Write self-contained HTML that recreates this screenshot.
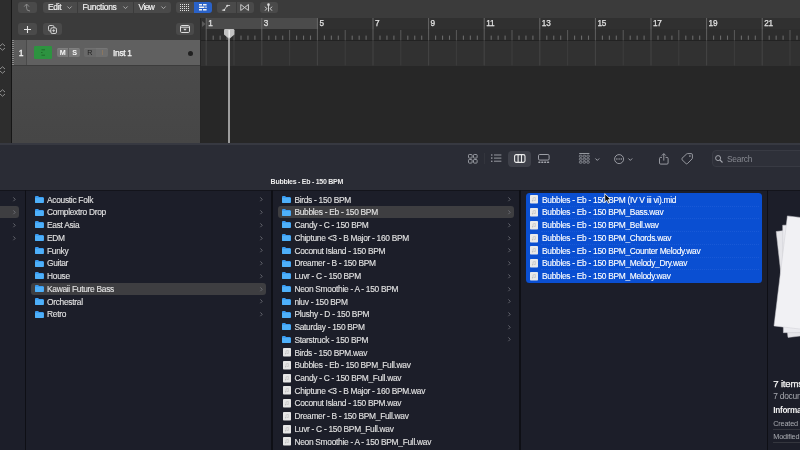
<!DOCTYPE html>
<html><head><meta charset="utf-8"><title>Logic + Finder</title>
<style>
*{margin:0;padding:0;box-sizing:border-box}
html,body{width:800px;height:450px;overflow:hidden;background:#1c1e29}
body{font-family:"Liberation Sans",sans-serif;position:relative;color:#e4e4e4}
.a{position:absolute}
svg{position:absolute;overflow:visible}
#logic{left:0;top:0;width:800px;height:142.5px;background:#272727}
#strip{left:0;top:0;width:11px;height:142.5px;background:#2d2d2d}
#stripline{left:11px;top:0;width:1px;height:142.5px;background:#161616}
#hdr{left:12px;top:0;width:188px;height:142.5px;background:linear-gradient(180deg,#3b3b3b 0,#3b3b3b 66px,#4a4a4a 66px,#464646 142px)}
#topbar{left:200px;top:0;width:600px;height:18px;background:#3b3b3b}
.btn{background:#4c4c4c;border-radius:3px;height:12px;top:1.5px}
.lt{font-size:8.4px;color:#f0f0f0;letter-spacing:-0.25px;line-height:12px;white-space:nowrap;top:1.4px;-webkit-text-stroke:0.2px #f0f0f0}
#trk{left:12px;top:40px;width:188px;height:25.4px;background:#606060}
#trknum{left:14px;top:40px;width:12px;height:25.4px;background:#5b5b5b}
#rul{left:200px;top:18px;width:600px;height:11px;background:#303030}
#cyc{left:206px;top:18px;width:112px;height:11px;background:#4b4b4b}
#tick{left:200px;top:29px;width:600px;height:11px;background:#2d2d2d}
#lane{left:200px;top:40px;width:600px;height:25.6px;background:#313131;border-top:1px solid #222}
#below{left:200px;top:66px;width:600px;height:76.5px;background:#272727}
.rn{font-size:8.2px;color:#e2e2e2;top:18.6px;line-height:10px;letter-spacing:-0.2px;-webkit-text-stroke:0.25px #e2e2e2}
#fsep{left:0;top:142.5px;width:800px;height:2.5px;background:#373941}
#ftb{left:0;top:144.5px;width:800px;height:45.5px;background:#2a2c35}
#cols{left:0;top:190px;width:800px;height:260px;background:#1c1e29}
.div{top:190px;width:1.3px;height:260px;background:#0e0f15}
.row{height:12px;line-height:12px;font-size:8.4px;letter-spacing:-0.29px;white-space:nowrap;color:#e2e2e2;-webkit-text-stroke:0.12px currentColor}
.sel{background:#3e3e41;border-radius:3px}
.doc{width:8px;height:9px;background:#e4e4e4;border-radius:1px}
</style></head><body><div id="root" class="a" style="left:0;top:0;width:800px;height:450px;will-change:transform;overflow:hidden">
<div id="logic" class="a"></div><div id="strip" class="a"></div><div id="stripline" class="a"></div><div id="hdr" class="a"></div><div id="topbar" class="a"></div><div id="rul" class="a"></div><div id="cyc" class="a"></div><div id="tick" class="a"></div><div id="lane" class="a"></div><div id="below" class="a"></div><div id="trk" class="a"></div><div id="trknum" class="a"></div>
<svg style="left:0;top:43px" width="6" height="8" viewBox="0 0 6 8"><path d="M0 3 L2.5 0.8 L5 3 M0 5 L2.5 7.2 L5 5" fill="none" stroke="#9a9a9a" stroke-width="0.9"/></svg><svg style="left:0;top:66px" width="6" height="8" viewBox="0 0 6 8"><path d="M0 3 L2.5 0.8 L5 3 M0 5 L2.5 7.2 L5 5" fill="none" stroke="#9a9a9a" stroke-width="0.9"/></svg><svg style="left:0;top:89px" width="6" height="8" viewBox="0 0 6 8"><path d="M0 3 L2.5 0.8 L5 3 M0 5 L2.5 7.2 L5 5" fill="none" stroke="#9a9a9a" stroke-width="0.9"/></svg><div class="a" style="left:18px;top:1.8px;width:19px;height:11.4px;background:#4a4a4a;border-radius:3px;"></div><svg style="left:23px;top:3px" width="9" height="9" viewBox="0 0 9 9"><path d="M1.2 3.6 L3.6 1 L6 3.6 M3.6 1 V5.2 Q3.6 8 7 8" fill="none" stroke="#8a8a8a" stroke-width="1"/></svg><div class="a" style="left:42.5px;top:1.8px;width:128px;height:11.4px;background:#4a4a4a;border-radius:3px;"></div><div class="a" style="left:76.5px;top:1.8px;width:1px;height:11.4px;background:#3b3b3b"></div><div class="a" style="left:132.5px;top:1.8px;width:1px;height:11.4px;background:#3b3b3b"></div><div class="a lt" style="left:48px">Edit</div><svg style="left:66.5px;top:6px" width="5" height="3.6" viewBox="0 0 5 3.6"><path d="M0.4 0.5 L2.5 2.6 L4.6 0.5" fill="none" stroke="#a8a8a8" stroke-width="1"/></svg><div class="a lt" style="left:82.5px">Functions</div><svg style="left:122.5px;top:6px" width="5" height="3.6" viewBox="0 0 5 3.6"><path d="M0.4 0.5 L2.5 2.6 L4.6 0.5" fill="none" stroke="#a8a8a8" stroke-width="1"/></svg><div class="a lt" style="left:138.5px;letter-spacing:-0.55px">View</div><svg style="left:161px;top:6px" width="5" height="3.6" viewBox="0 0 5 3.6"><path d="M0.4 0.5 L2.5 2.6 L4.6 0.5" fill="none" stroke="#a8a8a8" stroke-width="1"/></svg><div class="a" style="left:175.5px;top:1.8px;width:18.5px;height:11.4px;background:#4a4a4a;border-radius:3px;border-radius:3px 0 0 3px"></div><div class="a" style="left:194px;top:1.8px;width:18px;height:11.4px;background:#2a62c8;border-radius:3px;border-radius:0 3px 3px 0"></div><svg style="left:180px;top:4px" width="9" height="7" viewBox="0 0 9 7"><rect x="0" y="0" width="1" height="1" fill="#e0e0e0"/><rect x="2" y="0" width="1" height="1" fill="#e0e0e0"/><rect x="4" y="0" width="1" height="1" fill="#e0e0e0"/><rect x="6" y="0" width="1" height="1" fill="#e0e0e0"/><rect x="8" y="0" width="1" height="1" fill="#e0e0e0"/><rect x="0" y="2" width="1" height="1" fill="#e0e0e0"/><rect x="2" y="2" width="1" height="1" fill="#e0e0e0"/><rect x="4" y="2" width="1" height="1" fill="#e0e0e0"/><rect x="6" y="2" width="1" height="1" fill="#e0e0e0"/><rect x="8" y="2" width="1" height="1" fill="#e0e0e0"/><rect x="0" y="4" width="1" height="1" fill="#e0e0e0"/><rect x="2" y="4" width="1" height="1" fill="#e0e0e0"/><rect x="4" y="4" width="1" height="1" fill="#e0e0e0"/><rect x="6" y="4" width="1" height="1" fill="#e0e0e0"/><rect x="8" y="4" width="1" height="1" fill="#e0e0e0"/><rect x="0" y="6" width="1" height="1" fill="#e0e0e0"/><rect x="2" y="6" width="1" height="1" fill="#e0e0e0"/><rect x="4" y="6" width="1" height="1" fill="#e0e0e0"/><rect x="6" y="6" width="1" height="1" fill="#e0e0e0"/><rect x="8" y="6" width="1" height="1" fill="#e0e0e0"/></svg><svg style="left:199.3px;top:4.3px" width="7.6" height="6.6" viewBox="0 0 7.6 6.6"><path d="M0 0.8 H3 M4 0.8 H7.6 M0 3.3 H5.4 M6.4 3.3 H7.6 M0 5.8 H3 M4 5.8 H7.6" stroke="#f4f4f4" stroke-width="1.4" fill="none"/></svg><div class="a" style="left:217px;top:1.8px;width:37px;height:11.4px;background:#4a4a4a;border-radius:3px;"></div><div class="a" style="left:235.5px;top:1.8px;width:1px;height:11.4px;background:#3b3b3b"></div><svg style="left:221px;top:4px" width="10" height="7.4" viewBox="0 0 11 9"><path d="M0.5 7.5 H3.2 L7 1.8 H10.5" fill="none" stroke="#dcdcdc" stroke-width="1"/><circle cx="3.4" cy="7.3" r="1.2" fill="#dcdcdc"/><circle cx="7" cy="2" r="1.2" fill="#dcdcdc"/></svg><svg style="left:239.8px;top:4px" width="9.2" height="7" viewBox="0 0 10 8"><path d="M0.6 0.6 V7.4 L5 4 L9.4 7.4 V0.6 L5 4 Z" fill="none" stroke="#dcdcdc" stroke-width="1" stroke-linejoin="round"/></svg><div class="a" style="left:259.5px;top:1.8px;width:18.5px;height:11.4px;background:#4a4a4a;border-radius:3px;"></div><svg style="left:264.3px;top:3.2px" width="9" height="8.6" viewBox="0 0 10 10"><circle cx="5" cy="1.9" r="1.5" fill="#dcdcdc"/><path d="M5 2.5 V9.8 M1 4.3 L3 6.6 L1 8.9 M9 4.3 L7 6.6 L9 8.9" fill="none" stroke="#dcdcdc" stroke-width="1.1"/></svg><div class="a" style="left:18px;top:23px;width:19px;height:12px;background:#4a4a4a;border-radius:3px;"></div><svg style="left:24px;top:25.5px" width="7" height="7" viewBox="0 0 7 7"><path d="M3.5 0 V7 M0 3.5 H7" stroke="#e6e6e6" stroke-width="1.1"/></svg><div class="a" style="left:43px;top:23px;width:19px;height:12px;background:#4a4a4a;border-radius:3px;"></div><svg style="left:48px;top:24.5px" width="9" height="9" viewBox="0 0 9 9"><rect x="0.5" y="0.5" width="5.5" height="5.5" rx="1.4" fill="none" stroke="#e0e0e0" stroke-width="0.9"/><rect x="2.8" y="2.8" width="5.7" height="5.7" rx="1.4" fill="#4c4c4c" stroke="#e0e0e0" stroke-width="0.9"/><path d="M5.65 4.2 V7.1 M4.2 5.65 H7.1" stroke="#e0e0e0" stroke-width="0.8"/></svg><div class="a" style="left:175.5px;top:23px;width:18.5px;height:12px;background:#4a4a4a;border-radius:3px;"></div><svg style="left:180px;top:25px" width="10" height="8" viewBox="0 0 10 8"><rect x="0.5" y="0.5" width="9" height="7" rx="1.2" fill="none" stroke="#dedede" stroke-width="1"/><path d="M0.5 2.2 H9.5" stroke="#dedede" stroke-width="1"/><path d="M3.3 3.8 H6.7 L5 5.8 Z" fill="#dedede"/></svg><div class="a" style="left:12px;top:40px;width:2px;height:26px;background:repeating-linear-gradient(180deg,#8a8a8a 0 1px,#4a4a4a 1px 2px)"></div><div class="a" style="left:17.2px;top:47px;width:8px;font-size:8.5px;line-height:12px;color:#f4f4f4;text-align:center;-webkit-text-stroke:0.3px #f4f4f4">1</div><div class="a" style="left:26px;top:40px;width:1px;height:26px;background:#4a4a4a"></div><div class="a" style="left:34px;top:46px;width:18px;height:13px;background:#2d9340;border-radius:1.2px"></div><svg style="left:40px;top:49px" width="6" height="7" viewBox="0 0 6 7"><path d="M1.5 0.8 H5 M1 3.5 H2.5 M1.5 6.2 H5" stroke="#1f6a2b" stroke-width="1"/></svg><div class="a" style="left:57.2px;top:48px;width:11.2px;height:8.9px;background:#787878;border-radius:2px 0 0 2px;font-size:7.2px;line-height:9.1px;text-align:center;color:#f6f6f6;font-weight:bold;box-shadow:inset 0 0.6px 0 rgba(255,255,255,0.12)">M</div><div class="a" style="left:68.9px;top:48px;width:11.4px;height:8.9px;background:#787878;border-radius:0 2px 2px 0;font-size:7.2px;line-height:9.1px;text-align:center;color:#f6f6f6;font-weight:bold;box-shadow:inset 0 0.6px 0 rgba(255,255,255,0.12)">S</div><div class="a" style="left:84px;top:48px;width:11.6px;height:8.9px;background:#696969;border-radius:2px 0 0 2px;font-size:7.2px;line-height:9.1px;text-align:center;color:#1e1e1e;font-weight:normal;box-shadow:inset 0 0.6px 0 rgba(255,255,255,0.12)">R</div><div class="a" style="left:96px;top:48px;width:12px;height:8.9px;background:#6e6e6e;border-radius:0 2px 2px 0;font-size:7.2px;line-height:9.1px;text-align:center;color:#f6f6f6;font-weight:bold;box-shadow:inset 0 0.6px 0 rgba(255,255,255,0.12)"></div><div class="a" style="left:101.6px;top:50.4px;width:1px;height:4.5px;background:#8a7660"></div><div class="a" style="left:113px;top:47px;font-size:8.4px;line-height:12px;letter-spacing:-0.3px;color:#f6f6f6;white-space:nowrap;-webkit-text-stroke:0.25px #f6f6f6">Inst 1</div><div class="a" style="left:188.2px;top:50.6px;width:5px;height:5px;border-radius:50%;background:#202020"></div><div class="a" style="left:200px;top:18px;width:1px;height:124.5px;background:#262626"></div><div class="a" style="left:12px;top:65.2px;width:188px;height:1px;background:#3c3c3c"></div><svg style="left:201.5px;top:20.5px" width="4" height="6" viewBox="0 0 4 6"><path d="M0 0 L3.6 3 L0 6 Z" fill="#5a5a5a"/></svg><svg style="left:0;top:0" width="800" height="143" viewBox="0 0 800 143"><rect x="205.70" y="18" width="1" height="11" fill="#686868"/><rect x="205.70" y="29" width="1" height="11" fill="#606060"/><rect x="205.70" y="40" width="1" height="25.5" fill="#454545"/><rect x="212.65" y="35.6" width="1.1" height="4.2" fill="#6a6a6a"/><rect x="219.60" y="35.6" width="1.1" height="4.2" fill="#6a6a6a"/><rect x="226.55" y="35.6" width="1.1" height="4.2" fill="#6a6a6a"/><rect x="233.50" y="30" width="1" height="10" fill="#5a5a5a"/><rect x="233.50" y="40" width="1" height="25.5" fill="#3e3e3e"/><rect x="240.45" y="35.6" width="1.1" height="4.2" fill="#6a6a6a"/><rect x="247.40" y="35.6" width="1.1" height="4.2" fill="#6a6a6a"/><rect x="254.35" y="35.6" width="1.1" height="4.2" fill="#6a6a6a"/><rect x="261.30" y="18" width="1" height="11" fill="#686868"/><rect x="261.30" y="29" width="1" height="11" fill="#606060"/><rect x="261.30" y="40" width="1" height="25.5" fill="#454545"/><rect x="268.25" y="35.6" width="1.1" height="4.2" fill="#6a6a6a"/><rect x="275.20" y="35.6" width="1.1" height="4.2" fill="#6a6a6a"/><rect x="282.15" y="35.6" width="1.1" height="4.2" fill="#6a6a6a"/><rect x="289.10" y="30" width="1" height="10" fill="#5a5a5a"/><rect x="289.10" y="40" width="1" height="25.5" fill="#3e3e3e"/><rect x="296.05" y="35.6" width="1.1" height="4.2" fill="#6a6a6a"/><rect x="303.00" y="35.6" width="1.1" height="4.2" fill="#6a6a6a"/><rect x="309.95" y="35.6" width="1.1" height="4.2" fill="#6a6a6a"/><rect x="316.90" y="18" width="1" height="11" fill="#686868"/><rect x="316.90" y="29" width="1" height="11" fill="#606060"/><rect x="316.90" y="40" width="1" height="25.5" fill="#454545"/><rect x="323.85" y="35.6" width="1.1" height="4.2" fill="#6a6a6a"/><rect x="330.80" y="35.6" width="1.1" height="4.2" fill="#6a6a6a"/><rect x="337.75" y="35.6" width="1.1" height="4.2" fill="#6a6a6a"/><rect x="344.70" y="30" width="1" height="10" fill="#5a5a5a"/><rect x="344.70" y="40" width="1" height="25.5" fill="#3e3e3e"/><rect x="351.65" y="35.6" width="1.1" height="4.2" fill="#6a6a6a"/><rect x="358.60" y="35.6" width="1.1" height="4.2" fill="#6a6a6a"/><rect x="365.55" y="35.6" width="1.1" height="4.2" fill="#6a6a6a"/><rect x="372.50" y="18" width="1" height="11" fill="#686868"/><rect x="372.50" y="29" width="1" height="11" fill="#606060"/><rect x="372.50" y="40" width="1" height="25.5" fill="#454545"/><rect x="379.45" y="35.6" width="1.1" height="4.2" fill="#6a6a6a"/><rect x="386.40" y="35.6" width="1.1" height="4.2" fill="#6a6a6a"/><rect x="393.35" y="35.6" width="1.1" height="4.2" fill="#6a6a6a"/><rect x="400.30" y="30" width="1" height="10" fill="#5a5a5a"/><rect x="400.30" y="40" width="1" height="25.5" fill="#3e3e3e"/><rect x="407.25" y="35.6" width="1.1" height="4.2" fill="#6a6a6a"/><rect x="414.20" y="35.6" width="1.1" height="4.2" fill="#6a6a6a"/><rect x="421.15" y="35.6" width="1.1" height="4.2" fill="#6a6a6a"/><rect x="428.10" y="18" width="1" height="11" fill="#686868"/><rect x="428.10" y="29" width="1" height="11" fill="#606060"/><rect x="428.10" y="40" width="1" height="25.5" fill="#454545"/><rect x="435.05" y="35.6" width="1.1" height="4.2" fill="#6a6a6a"/><rect x="442.00" y="35.6" width="1.1" height="4.2" fill="#6a6a6a"/><rect x="448.95" y="35.6" width="1.1" height="4.2" fill="#6a6a6a"/><rect x="455.90" y="30" width="1" height="10" fill="#5a5a5a"/><rect x="455.90" y="40" width="1" height="25.5" fill="#3e3e3e"/><rect x="462.85" y="35.6" width="1.1" height="4.2" fill="#6a6a6a"/><rect x="469.80" y="35.6" width="1.1" height="4.2" fill="#6a6a6a"/><rect x="476.75" y="35.6" width="1.1" height="4.2" fill="#6a6a6a"/><rect x="483.70" y="18" width="1" height="11" fill="#686868"/><rect x="483.70" y="29" width="1" height="11" fill="#606060"/><rect x="483.70" y="40" width="1" height="25.5" fill="#454545"/><rect x="490.65" y="35.6" width="1.1" height="4.2" fill="#6a6a6a"/><rect x="497.60" y="35.6" width="1.1" height="4.2" fill="#6a6a6a"/><rect x="504.55" y="35.6" width="1.1" height="4.2" fill="#6a6a6a"/><rect x="511.50" y="30" width="1" height="10" fill="#5a5a5a"/><rect x="511.50" y="40" width="1" height="25.5" fill="#3e3e3e"/><rect x="518.45" y="35.6" width="1.1" height="4.2" fill="#6a6a6a"/><rect x="525.40" y="35.6" width="1.1" height="4.2" fill="#6a6a6a"/><rect x="532.35" y="35.6" width="1.1" height="4.2" fill="#6a6a6a"/><rect x="539.30" y="18" width="1" height="11" fill="#686868"/><rect x="539.30" y="29" width="1" height="11" fill="#606060"/><rect x="539.30" y="40" width="1" height="25.5" fill="#454545"/><rect x="546.25" y="35.6" width="1.1" height="4.2" fill="#6a6a6a"/><rect x="553.20" y="35.6" width="1.1" height="4.2" fill="#6a6a6a"/><rect x="560.15" y="35.6" width="1.1" height="4.2" fill="#6a6a6a"/><rect x="567.10" y="30" width="1" height="10" fill="#5a5a5a"/><rect x="567.10" y="40" width="1" height="25.5" fill="#3e3e3e"/><rect x="574.05" y="35.6" width="1.1" height="4.2" fill="#6a6a6a"/><rect x="581.00" y="35.6" width="1.1" height="4.2" fill="#6a6a6a"/><rect x="587.95" y="35.6" width="1.1" height="4.2" fill="#6a6a6a"/><rect x="594.90" y="18" width="1" height="11" fill="#686868"/><rect x="594.90" y="29" width="1" height="11" fill="#606060"/><rect x="594.90" y="40" width="1" height="25.5" fill="#454545"/><rect x="601.85" y="35.6" width="1.1" height="4.2" fill="#6a6a6a"/><rect x="608.80" y="35.6" width="1.1" height="4.2" fill="#6a6a6a"/><rect x="615.75" y="35.6" width="1.1" height="4.2" fill="#6a6a6a"/><rect x="622.70" y="30" width="1" height="10" fill="#5a5a5a"/><rect x="622.70" y="40" width="1" height="25.5" fill="#3e3e3e"/><rect x="629.65" y="35.6" width="1.1" height="4.2" fill="#6a6a6a"/><rect x="636.60" y="35.6" width="1.1" height="4.2" fill="#6a6a6a"/><rect x="643.55" y="35.6" width="1.1" height="4.2" fill="#6a6a6a"/><rect x="650.50" y="18" width="1" height="11" fill="#686868"/><rect x="650.50" y="29" width="1" height="11" fill="#606060"/><rect x="650.50" y="40" width="1" height="25.5" fill="#454545"/><rect x="657.45" y="35.6" width="1.1" height="4.2" fill="#6a6a6a"/><rect x="664.40" y="35.6" width="1.1" height="4.2" fill="#6a6a6a"/><rect x="671.35" y="35.6" width="1.1" height="4.2" fill="#6a6a6a"/><rect x="678.30" y="30" width="1" height="10" fill="#5a5a5a"/><rect x="678.30" y="40" width="1" height="25.5" fill="#3e3e3e"/><rect x="685.25" y="35.6" width="1.1" height="4.2" fill="#6a6a6a"/><rect x="692.20" y="35.6" width="1.1" height="4.2" fill="#6a6a6a"/><rect x="699.15" y="35.6" width="1.1" height="4.2" fill="#6a6a6a"/><rect x="706.10" y="18" width="1" height="11" fill="#686868"/><rect x="706.10" y="29" width="1" height="11" fill="#606060"/><rect x="706.10" y="40" width="1" height="25.5" fill="#454545"/><rect x="713.05" y="35.6" width="1.1" height="4.2" fill="#6a6a6a"/><rect x="720.00" y="35.6" width="1.1" height="4.2" fill="#6a6a6a"/><rect x="726.95" y="35.6" width="1.1" height="4.2" fill="#6a6a6a"/><rect x="733.90" y="30" width="1" height="10" fill="#5a5a5a"/><rect x="733.90" y="40" width="1" height="25.5" fill="#3e3e3e"/><rect x="740.85" y="35.6" width="1.1" height="4.2" fill="#6a6a6a"/><rect x="747.80" y="35.6" width="1.1" height="4.2" fill="#6a6a6a"/><rect x="754.75" y="35.6" width="1.1" height="4.2" fill="#6a6a6a"/><rect x="761.70" y="18" width="1" height="11" fill="#686868"/><rect x="761.70" y="29" width="1" height="11" fill="#606060"/><rect x="761.70" y="40" width="1" height="25.5" fill="#454545"/><rect x="768.65" y="35.6" width="1.1" height="4.2" fill="#6a6a6a"/><rect x="775.60" y="35.6" width="1.1" height="4.2" fill="#6a6a6a"/><rect x="782.55" y="35.6" width="1.1" height="4.2" fill="#6a6a6a"/><rect x="789.50" y="30" width="1" height="10" fill="#5a5a5a"/><rect x="789.50" y="40" width="1" height="25.5" fill="#3e3e3e"/><rect x="796.45" y="35.6" width="1.1" height="4.2" fill="#6a6a6a"/><rect x="803.40" y="35.6" width="1.1" height="4.2" fill="#6a6a6a"/><rect x="810.35" y="35.6" width="1.1" height="4.2" fill="#6a6a6a"/></svg><div class="a rn" style="left:208.2px">1</div><div class="a rn" style="left:263.8px">3</div><div class="a rn" style="left:319.4px">5</div><div class="a rn" style="left:375.0px">7</div><div class="a rn" style="left:430.6px">9</div><div class="a rn" style="left:486.2px">11</div><div class="a rn" style="left:541.8px">13</div><div class="a rn" style="left:597.4px">15</div><div class="a rn" style="left:653.0px">17</div><div class="a rn" style="left:708.6px">19</div><div class="a rn" style="left:764.2px">21</div><div class="a" style="left:228.3px;top:35px;width:1.8px;height:107.5px;background:#9c9c9c"></div><svg style="left:224px;top:29.3px" width="10.4" height="10" viewBox="0 0 10.4 10"><path d="M1.2 0 H9.2 Q10.4 0 10.4 1.2 V5.5 L5.2 10 L0 5.5 V1.2 Q0 0 1.2 0 Z" fill="#c2c2c2"/><path d="M5.2 1 V8.5" stroke="#ededed" stroke-width="1.4"/></svg>
<div id="fsep" class="a"></div><div id="ftb" class="a"></div><div id="cols" class="a"></div>
<svg style="left:467.5px;top:153.8px" width="9.6" height="9.6" viewBox="0 0 9.6 9.6"><rect x="0.5" y="0.5" width="3.6" height="3.6" rx="0.8" fill="none" stroke="#a4a6ad" stroke-width="0.9"/><rect x="5.5" y="0.5" width="3.6" height="3.6" rx="0.8" fill="none" stroke="#a4a6ad" stroke-width="0.9"/><rect x="0.5" y="5.5" width="3.6" height="3.6" rx="0.8" fill="none" stroke="#a4a6ad" stroke-width="0.9"/><rect x="5.5" y="5.5" width="3.6" height="3.6" rx="0.8" fill="none" stroke="#a4a6ad" stroke-width="0.9"/></svg><div class="a" style="left:483.5px;top:153px;width:1px;height:11px;background:#33353d"></div><svg style="left:490.7px;top:154.4px" width="10.4" height="8.2" viewBox="0 0 10.4 8.2"><circle cx="0.8" cy="1" r="0.8" fill="#a4a6ad"/><path d="M3 1 H10.4" stroke="#a4a6ad" stroke-width="0.9"/><circle cx="0.8" cy="4.1" r="0.8" fill="#a4a6ad"/><path d="M3 4.1 H10.4" stroke="#a4a6ad" stroke-width="0.9"/><circle cx="0.8" cy="7.2" r="0.8" fill="#a4a6ad"/><path d="M3 7.2 H10.4" stroke="#a4a6ad" stroke-width="0.9"/></svg><div class="a" style="left:508.2px;top:150.5px;width:23px;height:16.3px;border-radius:4px;background:#3e4049"></div><svg style="left:514px;top:154px" width="11.6" height="9" viewBox="0 0 11.6 9"><rect x="0.6" y="0.6" width="10.4" height="7.8" rx="1.6" fill="none" stroke="#ececec" stroke-width="1.1"/><path d="M4.1 0.6 V8.4 M7.5 0.6 V8.4" stroke="#ececec" stroke-width="1.1"/></svg><svg style="left:537.6px;top:154px" width="11.6" height="9.2" viewBox="0 0 11.6 9.2"><rect x="0.5" y="0.5" width="10.6" height="5.6" rx="1.2" fill="none" stroke="#a4a6ad" stroke-width="0.95"/><rect x="0.3" y="7.5" width="2.2" height="1.5" rx="0.4" fill="#a4a6ad"/><rect x="3.1999999999999997" y="7.5" width="2.2" height="1.5" rx="0.4" fill="#a4a6ad"/><rect x="6.1" y="7.5" width="2.2" height="1.5" rx="0.4" fill="#a4a6ad"/><rect x="9.0" y="7.5" width="2.2" height="1.5" rx="0.4" fill="#a4a6ad"/></svg><svg style="left:579.3px;top:152.6px" width="10.6" height="11.4" viewBox="0 0 10.6 11.4"><path d="M0.2 0.5 H10.4" stroke="#a4a6ad" stroke-width="0.9"/><rect x="0.4" y="2.2" width="2.5" height="2" rx="0.6" fill="none" stroke="#a4a6ad" stroke-width="0.7"/><rect x="4.1000000000000005" y="2.2" width="2.5" height="2" rx="0.6" fill="none" stroke="#a4a6ad" stroke-width="0.7"/><rect x="7.800000000000001" y="2.2" width="2.5" height="2" rx="0.6" fill="none" stroke="#a4a6ad" stroke-width="0.7"/><rect x="0.4" y="5.2" width="2.5" height="2" rx="0.6" fill="none" stroke="#a4a6ad" stroke-width="0.7"/><rect x="4.1000000000000005" y="5.2" width="2.5" height="2" rx="0.6" fill="none" stroke="#a4a6ad" stroke-width="0.7"/><rect x="7.800000000000001" y="5.2" width="2.5" height="2" rx="0.6" fill="none" stroke="#a4a6ad" stroke-width="0.7"/><rect x="0.4" y="8.2" width="2.5" height="2" rx="0.6" fill="none" stroke="#a4a6ad" stroke-width="0.7"/><rect x="4.1000000000000005" y="8.2" width="2.5" height="2" rx="0.6" fill="none" stroke="#a4a6ad" stroke-width="0.7"/><rect x="7.800000000000001" y="8.2" width="2.5" height="2" rx="0.6" fill="none" stroke="#a4a6ad" stroke-width="0.7"/></svg><svg style="left:594.6px;top:157.6px" width="4.6" height="3.4" viewBox="0 0 4.6 3.4"><path d="M0.4 0.5 L2.3 2.4 L4.199999999999999 0.5" fill="none" stroke="#a4a6ad" stroke-width="0.95"/></svg><svg style="left:613.7px;top:153.5px" width="10.2" height="10.2" viewBox="0 0 10.2 10.2"><circle cx="5.1" cy="5.1" r="4.5" fill="none" stroke="#a4a6ad" stroke-width="0.9"/><circle cx="2.9" cy="5.1" r="0.75" fill="#a4a6ad"/><circle cx="5.1" cy="5.1" r="0.75" fill="#a4a6ad"/><circle cx="7.3" cy="5.1" r="0.75" fill="#a4a6ad"/></svg><svg style="left:628px;top:157.6px" width="4.6" height="3.4" viewBox="0 0 4.6 3.4"><path d="M0.4 0.5 L2.3 2.4 L4.199999999999999 0.5" fill="none" stroke="#a4a6ad" stroke-width="0.95"/></svg><svg style="left:659.3px;top:152.8px" width="9.6" height="11.6" viewBox="0 0 9.6 11.6"><path d="M3 4.4 H1.6 Q0.5 4.4 0.5 5.5 V10 Q0.5 11.1 1.6 11.1 H8 Q9.1 11.1 9.1 10 V5.5 Q9.1 4.4 8 4.4 H6.6" fill="none" stroke="#a4a6ad" stroke-width="0.9"/><path d="M4.8 7.6 V0.8 M2.8 2.6 L4.8 0.6 L6.8 2.6" fill="none" stroke="#a4a6ad" stroke-width="0.9"/></svg><svg style="left:681px;top:153px" width="12" height="11.4" viewBox="0 0 12 11.4"><path d="M6.6 0.6 H10.2 Q11.4 0.6 11.4 1.8 V5 Q11.4 5.6 11 6 L6.4 10.6 Q5.7 11.2 5 10.6 L1 6.7 Q0.4 6 1 5.3 L5.6 1 Q6 0.6 6.6 0.6 Z" fill="none" stroke="#a4a6ad" stroke-width="0.9" stroke-linejoin="round"/><circle cx="8.9" cy="3.1" r="0.8" fill="#a4a6ad"/></svg><div class="a" style="left:711.6px;top:150px;width:100px;height:16.6px;border-radius:4px;background:#2e3039;border:1px solid #383a43"></div><svg style="left:715.4px;top:154.6px" width="8" height="8" viewBox="0 0 8 8"><circle cx="3.1" cy="3.1" r="2.5" fill="none" stroke="#a4a6ad" stroke-width="1"/><path d="M5 5 L7.5 7.5" stroke="#a4a6ad" stroke-width="1.1"/></svg><div class="a" style="left:727px;top:153.4px;font-size:8.4px;line-height:12px;letter-spacing:-0.25px;color:#868890">Search</div><div class="a" style="left:270.6px;top:176.3px;font-size:7px;line-height:11px;font-weight:bold;letter-spacing:-0.26px;color:#ececec;white-space:nowrap">Bubbles - Eb - 150 BPM</div><div class="a" style="left:0;top:189.6px;width:800px;height:1px;background:#13141b"></div><div class="a div" style="left:24.8px"></div><div class="a div" style="left:271.4px"></div><div class="a div" style="left:519.4px"></div><div class="a div" style="left:766.8px"></div><div class="a" style="left:-4px;top:206.23px;width:23px;height:12px;border-radius:3px;background:#3e3e41"></div><svg style="left:12.8px;top:197.40px" width="2.6" height="4.6" viewBox="0 0 3 5.2"><path d="M0.4 0.4 L2.6 2.6 L0.4 4.8" fill="none" stroke="#75777e" stroke-width="0.9"/></svg><svg style="left:12.8px;top:210.13px" width="2.6" height="4.6" viewBox="0 0 3 5.2"><path d="M0.4 0.4 L2.6 2.6 L0.4 4.8" fill="none" stroke="#75777e" stroke-width="0.9"/></svg><svg style="left:12.8px;top:222.87px" width="2.6" height="4.6" viewBox="0 0 3 5.2"><path d="M0.4 0.4 L2.6 2.6 L0.4 4.8" fill="none" stroke="#75777e" stroke-width="0.9"/></svg><svg style="left:12.8px;top:235.61px" width="2.6" height="4.6" viewBox="0 0 3 5.2"><path d="M0.4 0.4 L2.6 2.6 L0.4 4.8" fill="none" stroke="#75777e" stroke-width="0.9"/></svg><svg style="left:35px;top:196.00px" width="8.8" height="7" viewBox="0 0 9.2 7.4" preserveAspectRatio="none"><path d="M0 1 Q0 0 1 0 H3.2 L4.3 1 H8.2 Q9.2 1 9.2 2 V6.4 Q9.2 7.4 8.2 7.4 H1 Q0 7.4 0 6.4 Z" fill="#3a9cf2"/><path d="M0 2.2 H9.2 V6.4 Q9.2 7.4 8.2 7.4 H1 Q0 7.4 0 6.4 Z" fill="#4eb0fa"/></svg><div class="a row" style="left:47px;top:193.70px;color:#e2e2e2;">Acoustic Folk</div><svg style="left:260.3px;top:197.40px" width="2.6" height="4.6" viewBox="0 0 3 5.2"><path d="M0.4 0.4 L2.6 2.6 L0.4 4.8" fill="none" stroke="#75777e" stroke-width="0.9"/></svg><svg style="left:35px;top:208.73px" width="8.8" height="7" viewBox="0 0 9.2 7.4" preserveAspectRatio="none"><path d="M0 1 Q0 0 1 0 H3.2 L4.3 1 H8.2 Q9.2 1 9.2 2 V6.4 Q9.2 7.4 8.2 7.4 H1 Q0 7.4 0 6.4 Z" fill="#3a9cf2"/><path d="M0 2.2 H9.2 V6.4 Q9.2 7.4 8.2 7.4 H1 Q0 7.4 0 6.4 Z" fill="#4eb0fa"/></svg><div class="a row" style="left:47px;top:206.43px;color:#e2e2e2;">Complextro Drop</div><svg style="left:260.3px;top:210.13px" width="2.6" height="4.6" viewBox="0 0 3 5.2"><path d="M0.4 0.4 L2.6 2.6 L0.4 4.8" fill="none" stroke="#75777e" stroke-width="0.9"/></svg><svg style="left:35px;top:221.47px" width="8.8" height="7" viewBox="0 0 9.2 7.4" preserveAspectRatio="none"><path d="M0 1 Q0 0 1 0 H3.2 L4.3 1 H8.2 Q9.2 1 9.2 2 V6.4 Q9.2 7.4 8.2 7.4 H1 Q0 7.4 0 6.4 Z" fill="#3a9cf2"/><path d="M0 2.2 H9.2 V6.4 Q9.2 7.4 8.2 7.4 H1 Q0 7.4 0 6.4 Z" fill="#4eb0fa"/></svg><div class="a row" style="left:47px;top:219.17px;color:#e2e2e2;">East Asia</div><svg style="left:260.3px;top:222.87px" width="2.6" height="4.6" viewBox="0 0 3 5.2"><path d="M0.4 0.4 L2.6 2.6 L0.4 4.8" fill="none" stroke="#75777e" stroke-width="0.9"/></svg><svg style="left:35px;top:234.21px" width="8.8" height="7" viewBox="0 0 9.2 7.4" preserveAspectRatio="none"><path d="M0 1 Q0 0 1 0 H3.2 L4.3 1 H8.2 Q9.2 1 9.2 2 V6.4 Q9.2 7.4 8.2 7.4 H1 Q0 7.4 0 6.4 Z" fill="#3a9cf2"/><path d="M0 2.2 H9.2 V6.4 Q9.2 7.4 8.2 7.4 H1 Q0 7.4 0 6.4 Z" fill="#4eb0fa"/></svg><div class="a row" style="left:47px;top:231.91px;color:#e2e2e2;">EDM</div><svg style="left:260.3px;top:235.61px" width="2.6" height="4.6" viewBox="0 0 3 5.2"><path d="M0.4 0.4 L2.6 2.6 L0.4 4.8" fill="none" stroke="#75777e" stroke-width="0.9"/></svg><svg style="left:35px;top:246.94px" width="8.8" height="7" viewBox="0 0 9.2 7.4" preserveAspectRatio="none"><path d="M0 1 Q0 0 1 0 H3.2 L4.3 1 H8.2 Q9.2 1 9.2 2 V6.4 Q9.2 7.4 8.2 7.4 H1 Q0 7.4 0 6.4 Z" fill="#3a9cf2"/><path d="M0 2.2 H9.2 V6.4 Q9.2 7.4 8.2 7.4 H1 Q0 7.4 0 6.4 Z" fill="#4eb0fa"/></svg><div class="a row" style="left:47px;top:244.64px;color:#e2e2e2;">Funky</div><svg style="left:260.3px;top:248.34px" width="2.6" height="4.6" viewBox="0 0 3 5.2"><path d="M0.4 0.4 L2.6 2.6 L0.4 4.8" fill="none" stroke="#75777e" stroke-width="0.9"/></svg><svg style="left:35px;top:259.67px" width="8.8" height="7" viewBox="0 0 9.2 7.4" preserveAspectRatio="none"><path d="M0 1 Q0 0 1 0 H3.2 L4.3 1 H8.2 Q9.2 1 9.2 2 V6.4 Q9.2 7.4 8.2 7.4 H1 Q0 7.4 0 6.4 Z" fill="#3a9cf2"/><path d="M0 2.2 H9.2 V6.4 Q9.2 7.4 8.2 7.4 H1 Q0 7.4 0 6.4 Z" fill="#4eb0fa"/></svg><div class="a row" style="left:47px;top:257.38px;color:#e2e2e2;">Guitar</div><svg style="left:260.3px;top:261.07px" width="2.6" height="4.6" viewBox="0 0 3 5.2"><path d="M0.4 0.4 L2.6 2.6 L0.4 4.8" fill="none" stroke="#75777e" stroke-width="0.9"/></svg><svg style="left:35px;top:272.41px" width="8.8" height="7" viewBox="0 0 9.2 7.4" preserveAspectRatio="none"><path d="M0 1 Q0 0 1 0 H3.2 L4.3 1 H8.2 Q9.2 1 9.2 2 V6.4 Q9.2 7.4 8.2 7.4 H1 Q0 7.4 0 6.4 Z" fill="#3a9cf2"/><path d="M0 2.2 H9.2 V6.4 Q9.2 7.4 8.2 7.4 H1 Q0 7.4 0 6.4 Z" fill="#4eb0fa"/></svg><div class="a row" style="left:47px;top:270.11px;color:#e2e2e2;">House</div><svg style="left:260.3px;top:273.81px" width="2.6" height="4.6" viewBox="0 0 3 5.2"><path d="M0.4 0.4 L2.6 2.6 L0.4 4.8" fill="none" stroke="#75777e" stroke-width="0.9"/></svg><div class="a sel" style="left:31.4px;top:282.64px;width:235px;height:12px"></div><svg style="left:35px;top:285.14px" width="8.8" height="7" viewBox="0 0 9.2 7.4" preserveAspectRatio="none"><path d="M0 1 Q0 0 1 0 H3.2 L4.3 1 H8.2 Q9.2 1 9.2 2 V6.4 Q9.2 7.4 8.2 7.4 H1 Q0 7.4 0 6.4 Z" fill="#3a9cf2"/><path d="M0 2.2 H9.2 V6.4 Q9.2 7.4 8.2 7.4 H1 Q0 7.4 0 6.4 Z" fill="#4eb0fa"/></svg><div class="a row" style="left:47px;top:282.85px;color:#e2e2e2;">Kawaii Future Bass</div><svg style="left:260.3px;top:286.55px" width="2.6" height="4.6" viewBox="0 0 3 5.2"><path d="M0.4 0.4 L2.6 2.6 L0.4 4.8" fill="none" stroke="#75777e" stroke-width="0.9"/></svg><svg style="left:35px;top:297.88px" width="8.8" height="7" viewBox="0 0 9.2 7.4" preserveAspectRatio="none"><path d="M0 1 Q0 0 1 0 H3.2 L4.3 1 H8.2 Q9.2 1 9.2 2 V6.4 Q9.2 7.4 8.2 7.4 H1 Q0 7.4 0 6.4 Z" fill="#3a9cf2"/><path d="M0 2.2 H9.2 V6.4 Q9.2 7.4 8.2 7.4 H1 Q0 7.4 0 6.4 Z" fill="#4eb0fa"/></svg><div class="a row" style="left:47px;top:295.58px;color:#e2e2e2;">Orchestral</div><svg style="left:260.3px;top:299.28px" width="2.6" height="4.6" viewBox="0 0 3 5.2"><path d="M0.4 0.4 L2.6 2.6 L0.4 4.8" fill="none" stroke="#75777e" stroke-width="0.9"/></svg><svg style="left:35px;top:310.61px" width="8.8" height="7" viewBox="0 0 9.2 7.4" preserveAspectRatio="none"><path d="M0 1 Q0 0 1 0 H3.2 L4.3 1 H8.2 Q9.2 1 9.2 2 V6.4 Q9.2 7.4 8.2 7.4 H1 Q0 7.4 0 6.4 Z" fill="#3a9cf2"/><path d="M0 2.2 H9.2 V6.4 Q9.2 7.4 8.2 7.4 H1 Q0 7.4 0 6.4 Z" fill="#4eb0fa"/></svg><div class="a row" style="left:47px;top:308.31px;color:#e2e2e2;">Retro</div><svg style="left:260.3px;top:312.01px" width="2.6" height="4.6" viewBox="0 0 3 5.2"><path d="M0.4 0.4 L2.6 2.6 L0.4 4.8" fill="none" stroke="#75777e" stroke-width="0.9"/></svg><svg style="left:282.3px;top:196.00px" width="8.8" height="7" viewBox="0 0 9.2 7.4" preserveAspectRatio="none"><path d="M0 1 Q0 0 1 0 H3.2 L4.3 1 H8.2 Q9.2 1 9.2 2 V6.4 Q9.2 7.4 8.2 7.4 H1 Q0 7.4 0 6.4 Z" fill="#3a9cf2"/><path d="M0 2.2 H9.2 V6.4 Q9.2 7.4 8.2 7.4 H1 Q0 7.4 0 6.4 Z" fill="#4eb0fa"/></svg><div class="a row" style="left:294.4px;top:193.70px;color:#e2e2e2;">Birds - 150 BPM</div><svg style="left:507.5px;top:197.40px" width="2.6" height="4.6" viewBox="0 0 3 5.2"><path d="M0.4 0.4 L2.6 2.6 L0.4 4.8" fill="none" stroke="#75777e" stroke-width="0.9"/></svg><div class="a sel" style="left:278.4px;top:206.23px;width:236px;height:12px"></div><svg style="left:282.3px;top:208.73px" width="8.8" height="7" viewBox="0 0 9.2 7.4" preserveAspectRatio="none"><path d="M0 1 Q0 0 1 0 H3.2 L4.3 1 H8.2 Q9.2 1 9.2 2 V6.4 Q9.2 7.4 8.2 7.4 H1 Q0 7.4 0 6.4 Z" fill="#3a9cf2"/><path d="M0 2.2 H9.2 V6.4 Q9.2 7.4 8.2 7.4 H1 Q0 7.4 0 6.4 Z" fill="#4eb0fa"/></svg><div class="a row" style="left:294.4px;top:206.43px;color:#e2e2e2;">Bubbles - Eb - 150 BPM</div><svg style="left:507.5px;top:210.13px" width="2.6" height="4.6" viewBox="0 0 3 5.2"><path d="M0.4 0.4 L2.6 2.6 L0.4 4.8" fill="none" stroke="#75777e" stroke-width="0.9"/></svg><svg style="left:282.3px;top:221.47px" width="8.8" height="7" viewBox="0 0 9.2 7.4" preserveAspectRatio="none"><path d="M0 1 Q0 0 1 0 H3.2 L4.3 1 H8.2 Q9.2 1 9.2 2 V6.4 Q9.2 7.4 8.2 7.4 H1 Q0 7.4 0 6.4 Z" fill="#3a9cf2"/><path d="M0 2.2 H9.2 V6.4 Q9.2 7.4 8.2 7.4 H1 Q0 7.4 0 6.4 Z" fill="#4eb0fa"/></svg><div class="a row" style="left:294.4px;top:219.17px;color:#e2e2e2;">Candy - C - 150 BPM</div><svg style="left:507.5px;top:222.87px" width="2.6" height="4.6" viewBox="0 0 3 5.2"><path d="M0.4 0.4 L2.6 2.6 L0.4 4.8" fill="none" stroke="#75777e" stroke-width="0.9"/></svg><svg style="left:282.3px;top:234.21px" width="8.8" height="7" viewBox="0 0 9.2 7.4" preserveAspectRatio="none"><path d="M0 1 Q0 0 1 0 H3.2 L4.3 1 H8.2 Q9.2 1 9.2 2 V6.4 Q9.2 7.4 8.2 7.4 H1 Q0 7.4 0 6.4 Z" fill="#3a9cf2"/><path d="M0 2.2 H9.2 V6.4 Q9.2 7.4 8.2 7.4 H1 Q0 7.4 0 6.4 Z" fill="#4eb0fa"/></svg><div class="a row" style="left:294.4px;top:231.91px;color:#e2e2e2;">Chiptune &lt;3 - B Major - 160 BPM</div><svg style="left:507.5px;top:235.61px" width="2.6" height="4.6" viewBox="0 0 3 5.2"><path d="M0.4 0.4 L2.6 2.6 L0.4 4.8" fill="none" stroke="#75777e" stroke-width="0.9"/></svg><svg style="left:282.3px;top:246.94px" width="8.8" height="7" viewBox="0 0 9.2 7.4" preserveAspectRatio="none"><path d="M0 1 Q0 0 1 0 H3.2 L4.3 1 H8.2 Q9.2 1 9.2 2 V6.4 Q9.2 7.4 8.2 7.4 H1 Q0 7.4 0 6.4 Z" fill="#3a9cf2"/><path d="M0 2.2 H9.2 V6.4 Q9.2 7.4 8.2 7.4 H1 Q0 7.4 0 6.4 Z" fill="#4eb0fa"/></svg><div class="a row" style="left:294.4px;top:244.64px;color:#e2e2e2;">Coconut Island - 150 BPM</div><svg style="left:507.5px;top:248.34px" width="2.6" height="4.6" viewBox="0 0 3 5.2"><path d="M0.4 0.4 L2.6 2.6 L0.4 4.8" fill="none" stroke="#75777e" stroke-width="0.9"/></svg><svg style="left:282.3px;top:259.67px" width="8.8" height="7" viewBox="0 0 9.2 7.4" preserveAspectRatio="none"><path d="M0 1 Q0 0 1 0 H3.2 L4.3 1 H8.2 Q9.2 1 9.2 2 V6.4 Q9.2 7.4 8.2 7.4 H1 Q0 7.4 0 6.4 Z" fill="#3a9cf2"/><path d="M0 2.2 H9.2 V6.4 Q9.2 7.4 8.2 7.4 H1 Q0 7.4 0 6.4 Z" fill="#4eb0fa"/></svg><div class="a row" style="left:294.4px;top:257.38px;color:#e2e2e2;">Dreamer - B - 150 BPM</div><svg style="left:507.5px;top:261.07px" width="2.6" height="4.6" viewBox="0 0 3 5.2"><path d="M0.4 0.4 L2.6 2.6 L0.4 4.8" fill="none" stroke="#75777e" stroke-width="0.9"/></svg><svg style="left:282.3px;top:272.41px" width="8.8" height="7" viewBox="0 0 9.2 7.4" preserveAspectRatio="none"><path d="M0 1 Q0 0 1 0 H3.2 L4.3 1 H8.2 Q9.2 1 9.2 2 V6.4 Q9.2 7.4 8.2 7.4 H1 Q0 7.4 0 6.4 Z" fill="#3a9cf2"/><path d="M0 2.2 H9.2 V6.4 Q9.2 7.4 8.2 7.4 H1 Q0 7.4 0 6.4 Z" fill="#4eb0fa"/></svg><div class="a row" style="left:294.4px;top:270.11px;color:#e2e2e2;">Luvr - C - 150 BPM</div><svg style="left:507.5px;top:273.81px" width="2.6" height="4.6" viewBox="0 0 3 5.2"><path d="M0.4 0.4 L2.6 2.6 L0.4 4.8" fill="none" stroke="#75777e" stroke-width="0.9"/></svg><svg style="left:282.3px;top:285.14px" width="8.8" height="7" viewBox="0 0 9.2 7.4" preserveAspectRatio="none"><path d="M0 1 Q0 0 1 0 H3.2 L4.3 1 H8.2 Q9.2 1 9.2 2 V6.4 Q9.2 7.4 8.2 7.4 H1 Q0 7.4 0 6.4 Z" fill="#3a9cf2"/><path d="M0 2.2 H9.2 V6.4 Q9.2 7.4 8.2 7.4 H1 Q0 7.4 0 6.4 Z" fill="#4eb0fa"/></svg><div class="a row" style="left:294.4px;top:282.85px;color:#e2e2e2;">Neon Smoothie - A - 150 BPM</div><svg style="left:507.5px;top:286.55px" width="2.6" height="4.6" viewBox="0 0 3 5.2"><path d="M0.4 0.4 L2.6 2.6 L0.4 4.8" fill="none" stroke="#75777e" stroke-width="0.9"/></svg><svg style="left:282.3px;top:297.88px" width="8.8" height="7" viewBox="0 0 9.2 7.4" preserveAspectRatio="none"><path d="M0 1 Q0 0 1 0 H3.2 L4.3 1 H8.2 Q9.2 1 9.2 2 V6.4 Q9.2 7.4 8.2 7.4 H1 Q0 7.4 0 6.4 Z" fill="#3a9cf2"/><path d="M0 2.2 H9.2 V6.4 Q9.2 7.4 8.2 7.4 H1 Q0 7.4 0 6.4 Z" fill="#4eb0fa"/></svg><div class="a row" style="left:294.4px;top:295.58px;color:#e2e2e2;">nluv - 150 BPM</div><svg style="left:507.5px;top:299.28px" width="2.6" height="4.6" viewBox="0 0 3 5.2"><path d="M0.4 0.4 L2.6 2.6 L0.4 4.8" fill="none" stroke="#75777e" stroke-width="0.9"/></svg><svg style="left:282.3px;top:310.61px" width="8.8" height="7" viewBox="0 0 9.2 7.4" preserveAspectRatio="none"><path d="M0 1 Q0 0 1 0 H3.2 L4.3 1 H8.2 Q9.2 1 9.2 2 V6.4 Q9.2 7.4 8.2 7.4 H1 Q0 7.4 0 6.4 Z" fill="#3a9cf2"/><path d="M0 2.2 H9.2 V6.4 Q9.2 7.4 8.2 7.4 H1 Q0 7.4 0 6.4 Z" fill="#4eb0fa"/></svg><div class="a row" style="left:294.4px;top:308.31px;color:#e2e2e2;">Plushy - D - 150 BPM</div><svg style="left:507.5px;top:312.01px" width="2.6" height="4.6" viewBox="0 0 3 5.2"><path d="M0.4 0.4 L2.6 2.6 L0.4 4.8" fill="none" stroke="#75777e" stroke-width="0.9"/></svg><svg style="left:282.3px;top:323.35px" width="8.8" height="7" viewBox="0 0 9.2 7.4" preserveAspectRatio="none"><path d="M0 1 Q0 0 1 0 H3.2 L4.3 1 H8.2 Q9.2 1 9.2 2 V6.4 Q9.2 7.4 8.2 7.4 H1 Q0 7.4 0 6.4 Z" fill="#3a9cf2"/><path d="M0 2.2 H9.2 V6.4 Q9.2 7.4 8.2 7.4 H1 Q0 7.4 0 6.4 Z" fill="#4eb0fa"/></svg><div class="a row" style="left:294.4px;top:321.05px;color:#e2e2e2;">Saturday - 150 BPM</div><svg style="left:507.5px;top:324.75px" width="2.6" height="4.6" viewBox="0 0 3 5.2"><path d="M0.4 0.4 L2.6 2.6 L0.4 4.8" fill="none" stroke="#75777e" stroke-width="0.9"/></svg><svg style="left:282.3px;top:336.08px" width="8.8" height="7" viewBox="0 0 9.2 7.4" preserveAspectRatio="none"><path d="M0 1 Q0 0 1 0 H3.2 L4.3 1 H8.2 Q9.2 1 9.2 2 V6.4 Q9.2 7.4 8.2 7.4 H1 Q0 7.4 0 6.4 Z" fill="#3a9cf2"/><path d="M0 2.2 H9.2 V6.4 Q9.2 7.4 8.2 7.4 H1 Q0 7.4 0 6.4 Z" fill="#4eb0fa"/></svg><div class="a row" style="left:294.4px;top:333.78px;color:#e2e2e2;">Starstruck - 150 BPM</div><svg style="left:507.5px;top:337.48px" width="2.6" height="4.6" viewBox="0 0 3 5.2"><path d="M0.4 0.4 L2.6 2.6 L0.4 4.8" fill="none" stroke="#75777e" stroke-width="0.9"/></svg><svg style="left:282.8px;top:348.22px" width="8" height="8.5" viewBox="0 0 8.4 8.8" preserveAspectRatio="none"><rect x="0" y="0" width="8.4" height="8.8" rx="0.8" fill="#e6e6e6"/><path d="M3.2 6 V3 L5.6 2.5 V5.4" fill="none" stroke="#bdbdbd" stroke-width="0.6"/><circle cx="2.7" cy="6" r="0.7" fill="#bdbdbd"/><circle cx="5.1" cy="5.5" r="0.7" fill="#bdbdbd"/></svg><div class="a row" style="left:294.4px;top:346.52px;color:#e2e2e2;">Birds - 150 BPM.wav</div><svg style="left:282.8px;top:360.95px" width="8" height="8.5" viewBox="0 0 8.4 8.8" preserveAspectRatio="none"><rect x="0" y="0" width="8.4" height="8.8" rx="0.8" fill="#e6e6e6"/><path d="M3.2 6 V3 L5.6 2.5 V5.4" fill="none" stroke="#bdbdbd" stroke-width="0.6"/><circle cx="2.7" cy="6" r="0.7" fill="#bdbdbd"/><circle cx="5.1" cy="5.5" r="0.7" fill="#bdbdbd"/></svg><div class="a row" style="left:294.4px;top:359.25px;color:#e2e2e2;">Bubbles - Eb - 150 BPM_Full.wav</div><svg style="left:282.8px;top:373.69px" width="8" height="8.5" viewBox="0 0 8.4 8.8" preserveAspectRatio="none"><rect x="0" y="0" width="8.4" height="8.8" rx="0.8" fill="#e6e6e6"/><path d="M3.2 6 V3 L5.6 2.5 V5.4" fill="none" stroke="#bdbdbd" stroke-width="0.6"/><circle cx="2.7" cy="6" r="0.7" fill="#bdbdbd"/><circle cx="5.1" cy="5.5" r="0.7" fill="#bdbdbd"/></svg><div class="a row" style="left:294.4px;top:371.99px;color:#e2e2e2;">Candy - C - 150 BPM_Full.wav</div><svg style="left:282.8px;top:386.43px" width="8" height="8.5" viewBox="0 0 8.4 8.8" preserveAspectRatio="none"><rect x="0" y="0" width="8.4" height="8.8" rx="0.8" fill="#e6e6e6"/><path d="M3.2 6 V3 L5.6 2.5 V5.4" fill="none" stroke="#bdbdbd" stroke-width="0.6"/><circle cx="2.7" cy="6" r="0.7" fill="#bdbdbd"/><circle cx="5.1" cy="5.5" r="0.7" fill="#bdbdbd"/></svg><div class="a row" style="left:294.4px;top:384.73px;color:#e2e2e2;">Chiptune &lt;3 - B Major - 160 BPM.wav</div><svg style="left:282.8px;top:399.16px" width="8" height="8.5" viewBox="0 0 8.4 8.8" preserveAspectRatio="none"><rect x="0" y="0" width="8.4" height="8.8" rx="0.8" fill="#e6e6e6"/><path d="M3.2 6 V3 L5.6 2.5 V5.4" fill="none" stroke="#bdbdbd" stroke-width="0.6"/><circle cx="2.7" cy="6" r="0.7" fill="#bdbdbd"/><circle cx="5.1" cy="5.5" r="0.7" fill="#bdbdbd"/></svg><div class="a row" style="left:294.4px;top:397.46px;color:#e2e2e2;">Coconut Island - 150 BPM.wav</div><svg style="left:282.8px;top:411.90px" width="8" height="8.5" viewBox="0 0 8.4 8.8" preserveAspectRatio="none"><rect x="0" y="0" width="8.4" height="8.8" rx="0.8" fill="#e6e6e6"/><path d="M3.2 6 V3 L5.6 2.5 V5.4" fill="none" stroke="#bdbdbd" stroke-width="0.6"/><circle cx="2.7" cy="6" r="0.7" fill="#bdbdbd"/><circle cx="5.1" cy="5.5" r="0.7" fill="#bdbdbd"/></svg><div class="a row" style="left:294.4px;top:410.20px;color:#e2e2e2;">Dreamer - B - 150 BPM_Full.wav</div><svg style="left:282.8px;top:424.63px" width="8" height="8.5" viewBox="0 0 8.4 8.8" preserveAspectRatio="none"><rect x="0" y="0" width="8.4" height="8.8" rx="0.8" fill="#e6e6e6"/><path d="M3.2 6 V3 L5.6 2.5 V5.4" fill="none" stroke="#bdbdbd" stroke-width="0.6"/><circle cx="2.7" cy="6" r="0.7" fill="#bdbdbd"/><circle cx="5.1" cy="5.5" r="0.7" fill="#bdbdbd"/></svg><div class="a row" style="left:294.4px;top:422.93px;color:#e2e2e2;">Luvr - C - 150 BPM_Full.wav</div><svg style="left:282.8px;top:437.36px" width="8" height="8.5" viewBox="0 0 8.4 8.8" preserveAspectRatio="none"><rect x="0" y="0" width="8.4" height="8.8" rx="0.8" fill="#e6e6e6"/><path d="M3.2 6 V3 L5.6 2.5 V5.4" fill="none" stroke="#bdbdbd" stroke-width="0.6"/><circle cx="2.7" cy="6" r="0.7" fill="#bdbdbd"/><circle cx="5.1" cy="5.5" r="0.7" fill="#bdbdbd"/></svg><div class="a row" style="left:294.4px;top:435.66px;color:#e2e2e2;">Neon Smoothie - A - 150 BPM_Full.wav</div><div class="a" style="left:526px;top:193.3px;width:235.7px;height:89.3px;border-radius:3.5px;background:#0a4fd2"></div><svg style="left:530px;top:195.40px" width="8" height="8.5" viewBox="0 0 8.4 8.8" preserveAspectRatio="none"><rect x="0" y="0" width="8.4" height="8.8" rx="0.8" fill="#e9e9e9"/><path d="M3.2 6 V3 L5.6 2.5 V5.4" fill="none" stroke="#bdbdbd" stroke-width="0.6"/><circle cx="2.7" cy="6" r="0.7" fill="#bdbdbd"/><circle cx="5.1" cy="5.5" r="0.7" fill="#bdbdbd"/></svg><div class="a row" style="left:542px;top:193.70px;color:#ffffff;">Bubbles - Eb - 150 BPM (IV V iii vi).mid</div><div class="a" style="left:541px;top:205.73px;width:218px;height:0;border-top:1px dotted rgba(120,160,255,0.13)"></div><svg style="left:530px;top:208.13px" width="8" height="8.5" viewBox="0 0 8.4 8.8" preserveAspectRatio="none"><rect x="0" y="0" width="8.4" height="8.8" rx="0.8" fill="#e9e9e9"/><path d="M3.2 6 V3 L5.6 2.5 V5.4" fill="none" stroke="#bdbdbd" stroke-width="0.6"/><circle cx="2.7" cy="6" r="0.7" fill="#bdbdbd"/><circle cx="5.1" cy="5.5" r="0.7" fill="#bdbdbd"/></svg><div class="a row" style="left:542px;top:206.43px;color:#ffffff;">Bubbles - Eb - 150 BPM_Bass.wav</div><div class="a" style="left:541px;top:218.47px;width:218px;height:0;border-top:1px dotted rgba(120,160,255,0.13)"></div><svg style="left:530px;top:220.87px" width="8" height="8.5" viewBox="0 0 8.4 8.8" preserveAspectRatio="none"><rect x="0" y="0" width="8.4" height="8.8" rx="0.8" fill="#e9e9e9"/><path d="M3.2 6 V3 L5.6 2.5 V5.4" fill="none" stroke="#bdbdbd" stroke-width="0.6"/><circle cx="2.7" cy="6" r="0.7" fill="#bdbdbd"/><circle cx="5.1" cy="5.5" r="0.7" fill="#bdbdbd"/></svg><div class="a row" style="left:542px;top:219.17px;color:#ffffff;">Bubbles - Eb - 150 BPM_Bell.wav</div><div class="a" style="left:541px;top:231.21px;width:218px;height:0;border-top:1px dotted rgba(120,160,255,0.13)"></div><svg style="left:530px;top:233.61px" width="8" height="8.5" viewBox="0 0 8.4 8.8" preserveAspectRatio="none"><rect x="0" y="0" width="8.4" height="8.8" rx="0.8" fill="#e9e9e9"/><path d="M3.2 6 V3 L5.6 2.5 V5.4" fill="none" stroke="#bdbdbd" stroke-width="0.6"/><circle cx="2.7" cy="6" r="0.7" fill="#bdbdbd"/><circle cx="5.1" cy="5.5" r="0.7" fill="#bdbdbd"/></svg><div class="a row" style="left:542px;top:231.91px;color:#ffffff;">Bubbles - Eb - 150 BPM_Chords.wav</div><div class="a" style="left:541px;top:243.94px;width:218px;height:0;border-top:1px dotted rgba(120,160,255,0.13)"></div><svg style="left:530px;top:246.34px" width="8" height="8.5" viewBox="0 0 8.4 8.8" preserveAspectRatio="none"><rect x="0" y="0" width="8.4" height="8.8" rx="0.8" fill="#e9e9e9"/><path d="M3.2 6 V3 L5.6 2.5 V5.4" fill="none" stroke="#bdbdbd" stroke-width="0.6"/><circle cx="2.7" cy="6" r="0.7" fill="#bdbdbd"/><circle cx="5.1" cy="5.5" r="0.7" fill="#bdbdbd"/></svg><div class="a row" style="left:542px;top:244.64px;color:#ffffff;">Bubbles - Eb - 150 BPM_Counter Melody.wav</div><div class="a" style="left:541px;top:256.67px;width:218px;height:0;border-top:1px dotted rgba(120,160,255,0.13)"></div><svg style="left:530px;top:259.07px" width="8" height="8.5" viewBox="0 0 8.4 8.8" preserveAspectRatio="none"><rect x="0" y="0" width="8.4" height="8.8" rx="0.8" fill="#e9e9e9"/><path d="M3.2 6 V3 L5.6 2.5 V5.4" fill="none" stroke="#bdbdbd" stroke-width="0.6"/><circle cx="2.7" cy="6" r="0.7" fill="#bdbdbd"/><circle cx="5.1" cy="5.5" r="0.7" fill="#bdbdbd"/></svg><div class="a row" style="left:542px;top:257.38px;color:#ffffff;">Bubbles - Eb - 150 BPM_Melody_Dry.wav</div><div class="a" style="left:541px;top:269.41px;width:218px;height:0;border-top:1px dotted rgba(120,160,255,0.13)"></div><svg style="left:530px;top:271.81px" width="8" height="8.5" viewBox="0 0 8.4 8.8" preserveAspectRatio="none"><rect x="0" y="0" width="8.4" height="8.8" rx="0.8" fill="#e9e9e9"/><path d="M3.2 6 V3 L5.6 2.5 V5.4" fill="none" stroke="#bdbdbd" stroke-width="0.6"/><circle cx="2.7" cy="6" r="0.7" fill="#bdbdbd"/><circle cx="5.1" cy="5.5" r="0.7" fill="#bdbdbd"/></svg><div class="a row" style="left:542px;top:270.11px;color:#ffffff;">Bubbles - Eb - 150 BPM_Melody.wav</div><svg style="left:604.2px;top:192.8px" width="8.4" height="11.5" viewBox="0 0 8 11"><path d="M0.7 0.6 V8.6 L2.6 6.9 L3.9 9.9 L5.3 9.3 L4 6.4 H6.6 Z" fill="#0a0a0a" stroke="#f4f4f4" stroke-width="0.8" stroke-linejoin="round"/></svg><svg style="left:768px;top:190px" width="32" height="260" viewBox="768 190 32 260"><polygon points="776.2,231.5 816,227.1 827.8,333 788,337.4" fill="#e6e6ea" stroke="#c4c4ca" stroke-width="0.5"/><polygon points="782.7,225.2 822.7,225 823.4,332.4 783.4,332.7" fill="#ebebef" stroke="#c9c9cf" stroke-width="0.5"/><polygon points="787.4,215.9 827,220.7 813.7,330.7 774,325.9" fill="#f1f1f4" stroke="#cfcfd4" stroke-width="0.5"/></svg><div class="a" style="left:773.3px;top:376.6px;font-size:9.6px;line-height:13px;letter-spacing:-0.2px;color:#f6f6f6;white-space:nowrap;-webkit-text-stroke:0.25px #f6f6f6">7 items</div><div class="a" style="left:773.3px;top:390px;font-size:8.4px;line-height:12px;letter-spacing:-0.25px;color:#a9abb1;white-space:nowrap">7 documents</div><div class="a" style="left:773.3px;top:404.5px;font-size:8.2px;line-height:12px;letter-spacing:-0.3px;font-weight:bold;color:#f2f2f2;white-space:nowrap">Information</div><div class="a" style="left:773.3px;top:418px;font-size:7.3px;line-height:11px;letter-spacing:-0.2px;color:#a9abb1;white-space:nowrap">Created</div><div class="a" style="left:773.3px;top:429px;width:30px;height:1px;background:#34363e"></div><div class="a" style="left:773.3px;top:431.3px;font-size:7.3px;line-height:11px;letter-spacing:-0.2px;color:#a9abb1;white-space:nowrap">Modified</div><div class="a" style="left:773.3px;top:441.8px;width:30px;height:1px;background:#34363e"></div>
</div></body></html>
